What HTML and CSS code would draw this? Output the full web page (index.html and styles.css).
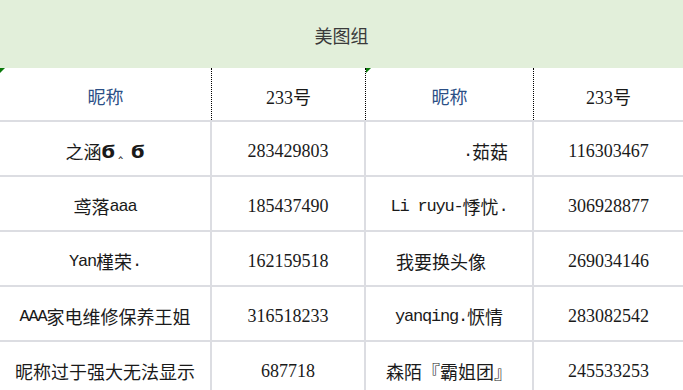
FILE: index.html
```html
<!DOCTYPE html>
<html lang="zh-CN">
<head>
<meta charset="utf-8">
<title>美图组</title>
<link rel="stylesheet" href="styles.css">
</head>
<body>
<div class="sheet">
  <div class="title">美图组</div>
  <div class="head">
    <div class="hc mark nick">昵称</div>
    <div class="hc num">233号</div>
    <div class="hc mark nick">昵称</div>
    <div class="hc num last">233号</div>
  </div>
  <div class="grid">
    <div class="cell">之涵<span class="sym">Ϭ</span><span class="caret">‸</span><span class="sym">Ϭ</span></div>
    <div class="cell num">283429803</div>
    <div class="cell shift-right"><span class="lat">.</span>茹菇</div>
    <div class="cell num">116303467</div>

    <div class="cell">鸢落<span class="lat">aaa</span></div>
    <div class="cell num">185437490</div>
    <div class="cell"><span class="lat">Li ruyu-</span>悸忧<span class="lat">.</span></div>
    <div class="cell num">306928877</div>

    <div class="cell"><span class="lat">Yan</span>槿荣<span class="lat">.</span></div>
    <div class="cell num">162159518</div>
    <div class="cell shift-left">我要换头像</div>
    <div class="cell num">269034146</div>

    <div class="cell"><span class="lat">AAA</span>家电维修保养王姐</div>
    <div class="cell num">316518233</div>
    <div class="cell"><span class="lat">yanqing.</span>恹情</div>
    <div class="cell num">283082542</div>

    <div class="cell">昵称过于强大无法显示</div>
    <div class="cell num">687718</div>
    <div class="cell">森陌『霸姐团』</div>
    <div class="cell num">245533253</div>
  </div>
</div>
</body>
</html>
```

FILE: styles.css
```css
html, body {
  margin: 0;
  padding: 0;
  background: #ffffff;
}

body {
  font-family: "Noto Sans CJK SC", "Liberation Serif", sans-serif;
  font-size: 18px;
  color: #1a1a1a;
  overflow: hidden;
}

.sheet {
  width: 683px;
  height: 390px;
  overflow: hidden;
}

.title {
  height: 68px;
  background: #e2efda;
  display: flex;
  align-items: center;
  justify-content: center;
  color: #3a3a3a;
  padding-top: 1px;
  box-sizing: border-box;
}

.head {
  display: grid;
  grid-template-columns: 212px 154px 168px 1fr;
  height: 54px;
  border-bottom: 2px solid #dcdde2;
  box-sizing: border-box;
}

.hc {
  position: relative;
  display: flex;
  align-items: center;
  justify-content: center;
  border-right: 1px dotted #000000;
  padding-top: 3px;
  box-sizing: border-box;
}

.hc.last {
  border-right: none;
}

.nick {
  color: #2b4f86;
}

.mark::before {
  content: "";
  position: absolute;
  left: 0;
  top: 0;
  border-top: 5px solid #0a7a0a;
  border-right: 5px solid transparent;
}

.grid {
  display: grid;
  grid-template-columns: 210px 152px 166px 1fr;
  grid-auto-rows: 53px;
  gap: 2px;
  background: #dcdde2;
}

.cell {
  background: #ffffff;
  display: flex;
  align-items: center;
  justify-content: center;
  padding-top: 5px;
  box-sizing: border-box;
  white-space: nowrap;
}

.num {
  font-family: "Liberation Serif", serif;
}

.lat {
  font-family: "Liberation Mono", monospace;
  font-size: 17px;
  letter-spacing: -1.2px;
}

.sym {
  font-family: "DejaVu Sans", sans-serif;
  font-size: 18px;
  font-weight: bold;
}

.caret {
  font-family: "DejaVu Sans", sans-serif;
  font-size: 14px;
  margin: 0 8px 0 3px;
}

.shift-right {
  padding-left: 73px;
}

.shift-left {
  padding-right: 16px;
}
```
